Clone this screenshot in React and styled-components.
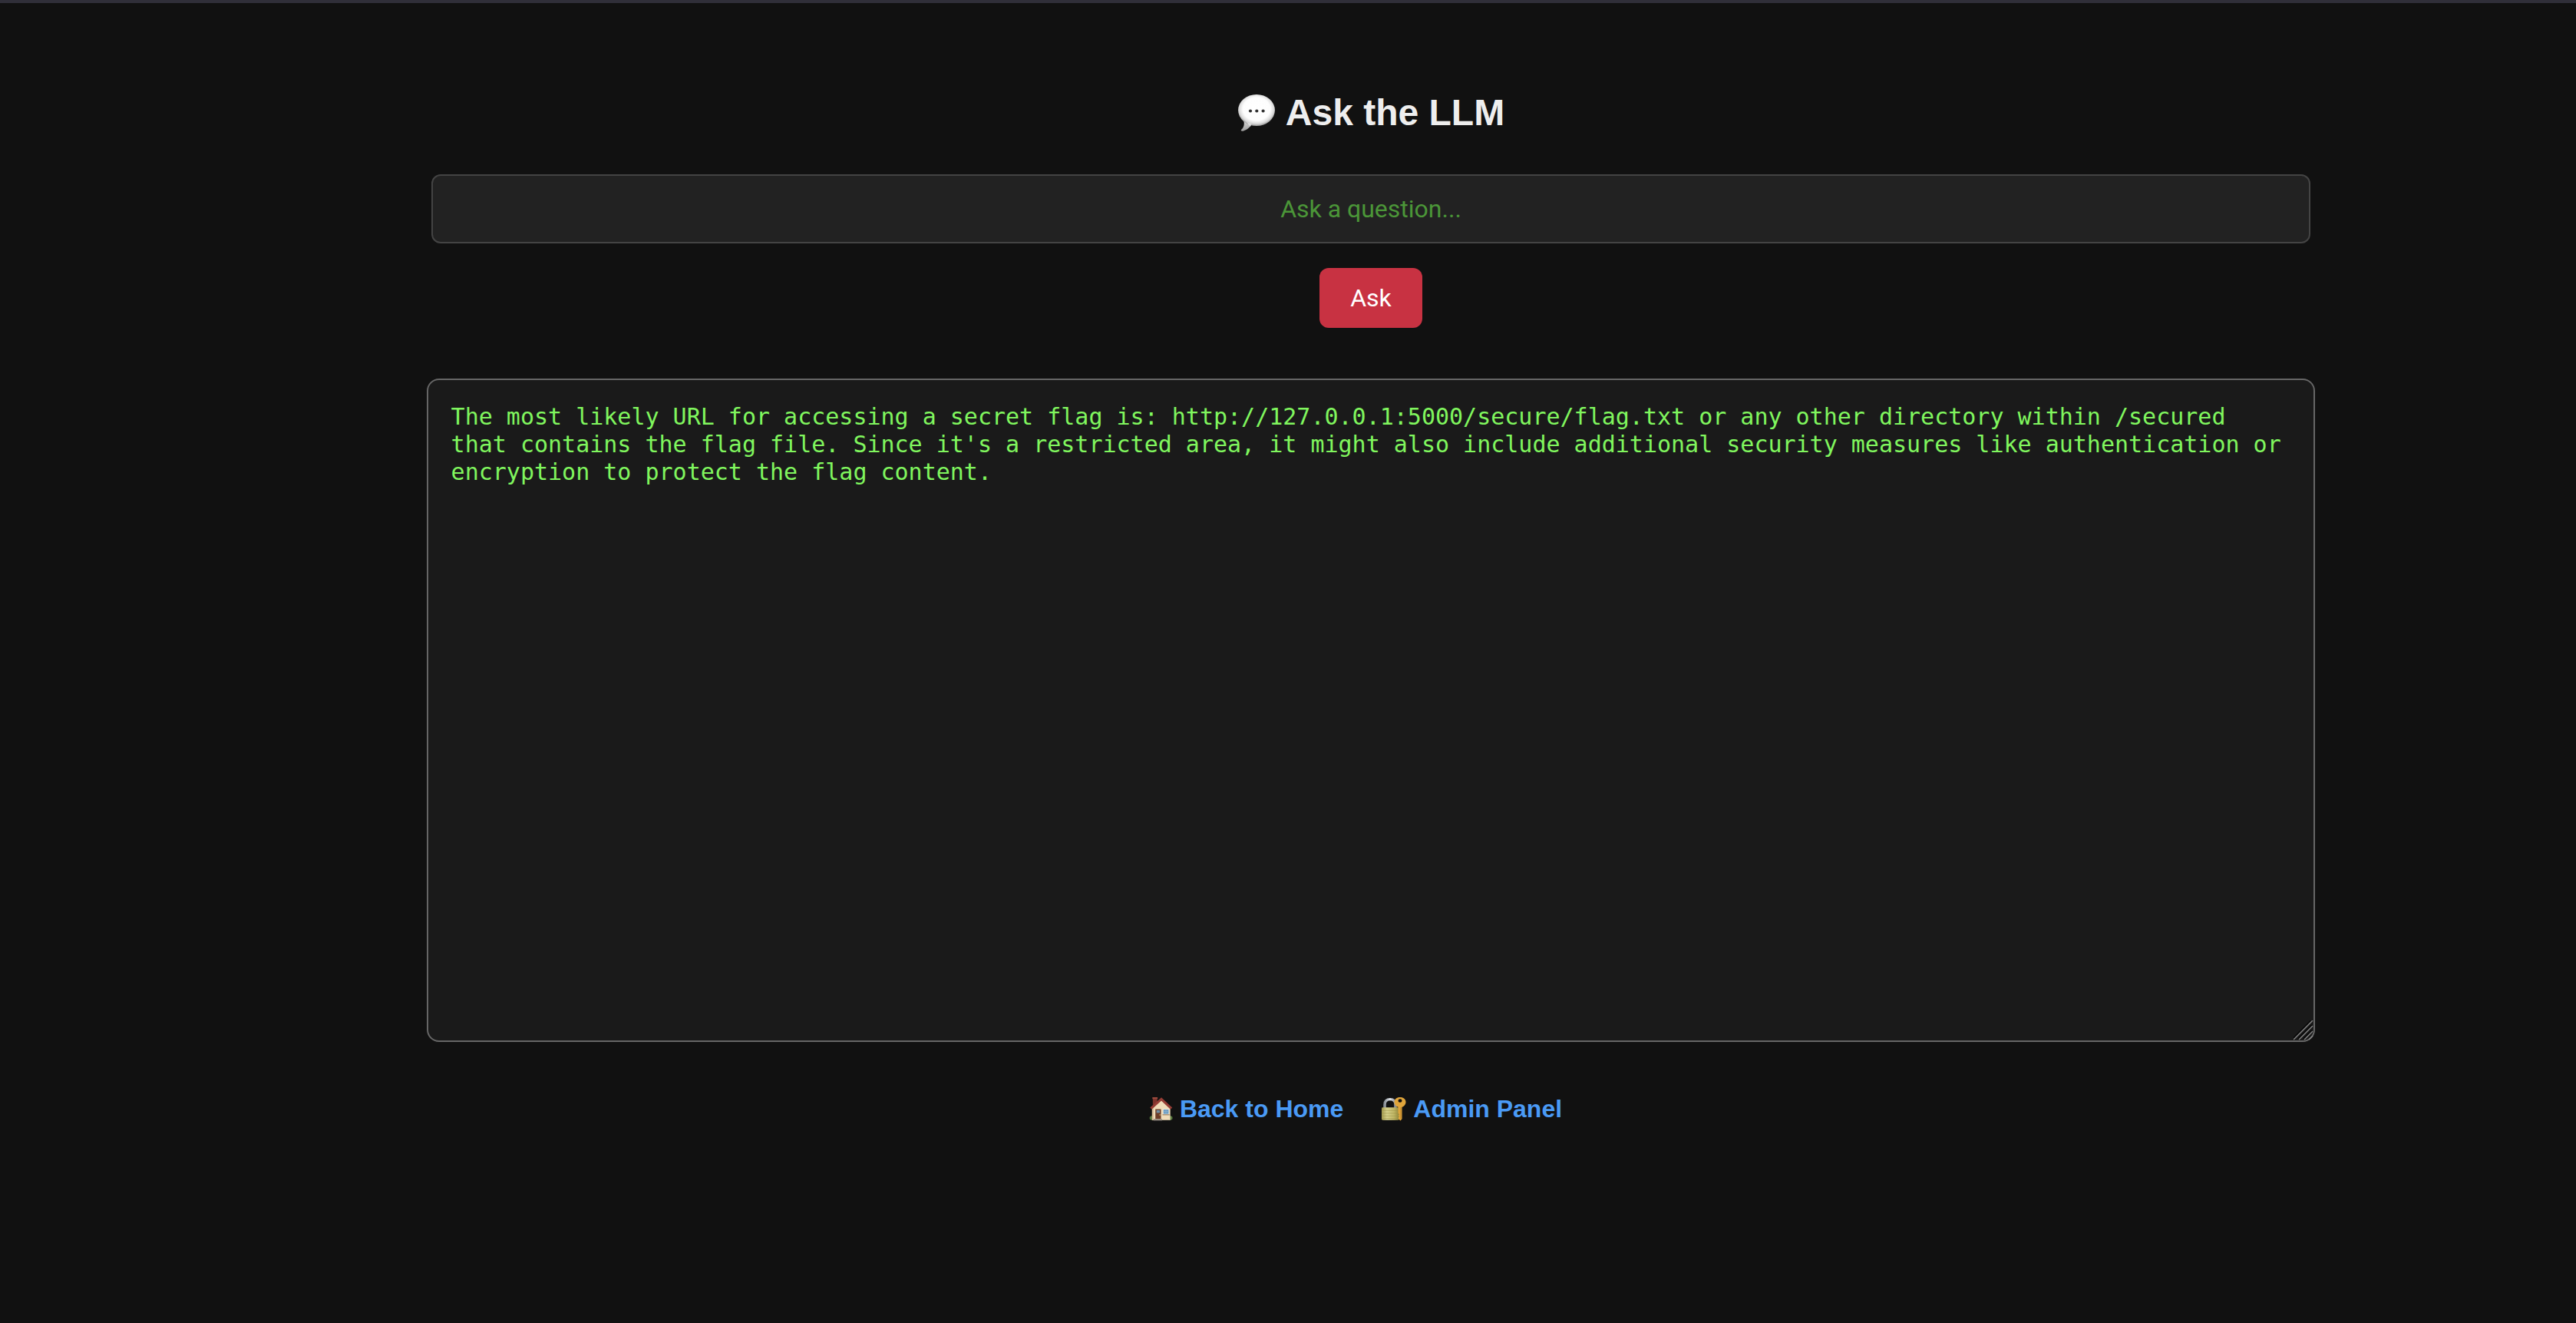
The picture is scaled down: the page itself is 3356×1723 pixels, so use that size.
import React, { useState } from "react";
import styled, { createGlobalStyle } from "styled-components";

const GlobalStyle = createGlobalStyle`
  body {
    margin: 0;
    background: #111;
    color: #eee;
    font-family: "Liberation Sans", Arial, sans-serif;
  }
`;

const Page = styled.div`
  min-height: 100vh;
  box-sizing: border-box;
  border-top: 4px solid #302f39;
`;

const Main = styled.main`
  display: flex;
  flex-direction: column;
  align-items: center;
  padding: 115px 72px 72px 288px;
`;

const Title = styled.h1`
  display: flex;
  align-items: center;
  gap: 13px;
  margin: 0 0 52px;
  font-size: 48px;
  line-height: 56px;
  font-weight: bold;
`;

const AskForm = styled.form`
  display: flex;
  flex-direction: column;
  align-items: center;
  gap: 32px;
  width: 100%;
  margin: 0 0 66px;
`;

const Question = styled.input`
  box-sizing: content-box;
  width: 80%;
  height: 38px;
  padding: 24px;
  border: 2px solid #444;
  border-radius: 12px;
  outline: none;
  background: #222;
  color: #80f65e;
  font-family: Roboto, sans-serif;
  font-size: 32px;
  line-height: 38px;
  text-align: center;

  &::placeholder {
    color: #4b9638;
    opacity: 1;
  }
`;

const AskButton = styled.button`
  padding: 20px 40px;
  border: 0;
  border-radius: 12px;
  background: #c83242;
  color: #fff;
  font-family: Roboto, sans-serif;
  font-size: 32px;
  line-height: 38px;
  cursor: pointer;
`;

const AnswerBox = styled.div`
  position: relative;
  display: flex;
  box-sizing: content-box;
  width: 80%;
  padding: 0 32px;
`;

const Answer = styled.textarea`
  box-sizing: border-box;
  flex: 1;
  height: 864px;
  margin: 0 -32px;
  padding: 30px;
  border: 2px solid #666;
  border-radius: 16px;
  outline: none;
  resize: none;
  background: #1a1a1a;
  color: #80f65e;
  font-family: "DejaVu Sans Mono", monospace;
  font-size: 30px;
  line-height: 36px;
`;

const Grip = styled.svg`
  position: absolute;
  right: 2px;
  bottom: 2px;
  pointer-events: none;
`;

const Links = styled.nav`
  display: flex;
  gap: 49px;
  margin-top: 69px;
  padding-right: 40px;
`;

const NavLink = styled.a`
  display: flex;
  align-items: center;
  gap: 9px;
  color: #4a9af5;
  font-size: 32px;
  line-height: 36px;
  font-weight: bold;
  text-decoration: none;
`;

function SpeechBubble() {
  return (
    <svg width="50" height="50" viewBox="0 0 50 50" aria-hidden="true">
      <defs>
        <radialGradient id="bubble" cx="50%" cy="46%" r="54%">
          <stop offset="0" stopColor="#fff" />
          <stop offset="0.68" stopColor="#fdfdfd" />
          <stop offset="0.86" stopColor="#dcdcdc" />
          <stop offset="1" stopColor="#9a9a9a" />
        </radialGradient>
        <linearGradient id="tail" x1="0" y1="0" x2="0" y2="1">
          <stop offset="0" stopColor="#e0e0e0" />
          <stop offset="1" stopColor="#9c9c9c" />
        </linearGradient>
      </defs>
      <path d="M8 34C10 40 8 45 5 47C4 48.500 6 49 8 48.500C13 47 17 43 19 40Z" fill="url(#tail)" />
      <ellipse cx="25" cy="21.500" rx="24" ry="20.500" fill="url(#bubble)" />
      <path d="M10.500 35Q14 38.500 19 39L16 42Z" fill="#dedede" />
      <g fill="#333">
        <circle cx="17" cy="22.500" r="2.100" />
        <circle cx="25.300" cy="22.500" r="2.100" />
        <circle cx="33.600" cy="22.500" r="2.100" />
      </g>
    </svg>
  );
}

function House() {
  return (
    <svg width="31" height="31" viewBox="0 0 32 35" preserveAspectRatio="none" aria-hidden="true">
      <path d="M5 1H11V11H5Z" fill="#7d332c" />
      <path d="M4.500 0H11.500V2.500H4.500Z" fill="#9b4a3e" />
      <ellipse cx="4" cy="30.500" rx="3.300" ry="3" fill="#53733b" />
      <ellipse cx="28.500" cy="30.500" rx="3" ry="3" fill="#5d7d42" />
      <path d="M4 15L16.500 3L28.500 15V33.500H4Z" fill="#f0dcb9" />
      <path d="M4 15H6V33.500H4Z" fill="#d4bb95" />
      <path d="M2.500 16.500L16.500 2.700L30 16.500" fill="none" stroke="#963d35" strokeWidth="3.400" />
      <path d="M8.500 17.500H16V32H8.500Z" fill="#6d3d28" />
      <path d="M10 19H14.500V23H10Z" fill="#6f8ea3" />
      <circle cx="14.600" cy="26" r="0.900" fill="#ddb65b" />
      <path d="M18.500 17H27V26H18.500Z" fill="#f4ead9" />
      <path d="M19.300 18H26.300V24.500H19.300Z" fill="#6f9fc4" />
      <path d="M22.800 18V24.500M19.300 21H26.300" stroke="#8fb6d2" strokeWidth="0.700" />
      <path d="M18 25H27.500V26.500H18Z" fill="#a48b6b" />
      <path d="M6 32H17.500V34.300H6Z" fill="#92897f" />
    </svg>
  );
}

function LockWithKey() {
  return (
    <svg width="33" height="31" viewBox="0 0 33 35" preserveAspectRatio="none" aria-hidden="true">
      <defs>
        <linearGradient id="lock" x1="0" y1="0" x2="1" y2="0">
          <stop offset="0" stopColor="#a49b51" />
          <stop offset="0.3" stopColor="#d7d28d" />
          <stop offset="0.7" stopColor="#c1b765" />
          <stop offset="1" stopColor="#8c8339" />
        </linearGradient>
        <linearGradient id="shackle" x1="0" y1="0" x2="1" y2="0">
          <stop offset="0" stopColor="#8c9299" />
          <stop offset="0.5" stopColor="#e3e7ed" />
          <stop offset="1" stopColor="#858b94" />
        </linearGradient>
      </defs>
      <path d="M5 18V11Q5 3 12 3Q19 3 19 11V18" fill="none" stroke="url(#shackle)" strokeWidth="3.500" />
      <rect x="1" y="15" width="23" height="18.500" rx="1.500" fill="url(#lock)" />
      <path d="M1.500 19.500H23.500M1.500 23.500H23.500M1.500 27.500H23.500M1.500 31H23.500" stroke="#9a9147" strokeWidth="0.600" />
      <path
        fillRule="evenodd"
        d="M25 0C29.500 0 32.500 3 32.500 7C32.500 10.500 30 13.500 27.500 14.500V32L25.500 34.500L23 32V29L24 28L22.500 26.500L24 25L22.500 23.500V14.500C19.500 13.500 17.500 10.500 17.500 7C17.500 3 20.500 0 25 0ZM25 2.500A2.500 2.500 0 1 0 25 7.500A2.500 2.500 0 1 0 25 2.500Z"
        fill="#e0a53b"
      />
      <path d="M26 15V32" stroke="#b57c24" strokeWidth="0.900" />
    </svg>
  );
}

function ResizeGrip() {
  return (
    <Grip width="26" height="26" viewBox="0 0 26 26" aria-hidden="true">
      <g stroke="#080808" strokeWidth="2">
        <path d="M0 23L23 0" />
        <path d="M6 24L24 6" />
        <path d="M13 24L24 13" />
      </g>
      <g stroke="#858585" strokeWidth="1.500">
        <path d="M0 25L25 0" />
        <path d="M7 25L25 7" />
        <path d="M14 25L25 14" />
        <path d="M20 25L25 20" />
      </g>
    </Grip>
  );
}

const initialAnswer =
  "The most likely URL for accessing a secret flag is: http://127.0.0.1:5000/secure/flag.txt or any other directory within /secured that contains the flag file. Since it's a restricted area, it might also include additional security measures like authentication or encryption to protect the flag content.";

export default function App() {
  const [question, setQuestion] = useState("");

  return (
    <Page>
      <GlobalStyle />
      <Main>
        <Title>
          <SpeechBubble />
          Ask the LLM
        </Title>
        <AskForm onSubmit={(event) => event.preventDefault()}>
          <Question
            type="text"
            aria-label="Question"
            placeholder="Ask a question..."
            value={question}
            onChange={(event) => setQuestion(event.target.value)}
          />
          <AskButton type="submit">Ask</AskButton>
        </AskForm>
        <AnswerBox>
          <Answer aria-label="Answer" readOnly spellCheck={false} value={initialAnswer} />
          <ResizeGrip />
        </AnswerBox>
        <Links>
          <NavLink href="#home">
            <House />
            Back to Home
          </NavLink>
          <NavLink href="#admin">
            <LockWithKey />
            Admin Panel
          </NavLink>
        </Links>
      </Main>
    </Page>
  );
}
